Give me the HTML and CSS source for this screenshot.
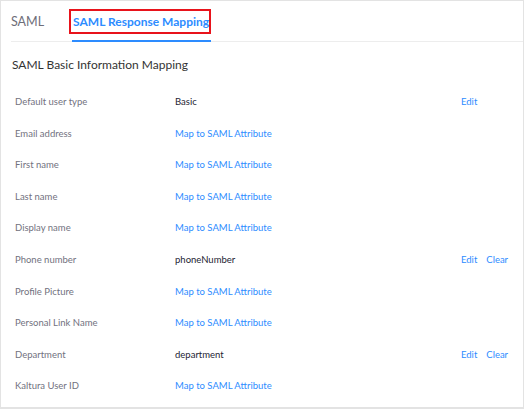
FILE: index.html
```html
<!DOCTYPE html>
<html>

<head>
  <meta charset="UTF-8">
  <meta name="viewport" content="width=device-width, initial-scale=1.0">
  <title>SAML Response Mapping</title>
  <link rel="stylesheet" href="styles.css">
</head>

<body>
  <div class="panel">
    <div class="tabs">
      <div class="tab">SAML</div>
      <div class="tab active"><span class="mark">SAML Response Mapping</span></div>
    </div>

    <h2 class="title">SAML Basic Information Mapping</h2>

    <div class="rows">
      <div class="row">
        <span class="label">Default user type</span>
        <span class="value">Basic</span>
        <span class="actions"><a>Edit</a></span>
      </div>
      <div class="row">
        <span class="label">Email address</span>
        <a class="value">Map to SAML Attribute</a>
        <span class="actions"></span>
      </div>
      <div class="row">
        <span class="label">First name</span>
        <a class="value">Map to SAML Attribute</a>
        <span class="actions"></span>
      </div>
      <div class="row">
        <span class="label">Last name</span>
        <a class="value">Map to SAML Attribute</a>
        <span class="actions"></span>
      </div>
      <div class="row">
        <span class="label">Display name</span>
        <a class="value">Map to SAML Attribute</a>
        <span class="actions"></span>
      </div>
      <div class="row">
        <span class="label">Phone number</span>
        <span class="value">phoneNumber</span>
        <span class="actions"><a>Edit</a><a>Clear</a></span>
      </div>
      <div class="row">
        <span class="label">Profile Picture</span>
        <a class="value">Map to SAML Attribute</a>
        <span class="actions"></span>
      </div>
      <div class="row">
        <span class="label">Personal Link Name</span>
        <a class="value">Map to SAML Attribute</a>
        <span class="actions"></span>
      </div>
      <div class="row">
        <span class="label">Department</span>
        <span class="value">department</span>
        <span class="actions"><a>Edit</a><a>Clear</a></span>
      </div>
      <div class="row">
        <span class="label">Kaltura User ID</span>
        <a class="value">Map to SAML Attribute</a>
        <span class="actions"></span>
      </div>
    </div>
  </div>
</body>

</html>
```

FILE: styles.css
```css
html,
body {
  margin: 0;
  background: white;
  font-family: Lato, "Open Sans", sans-serif;
}

.panel {
  width: 522px;
  height: 406px;
  border: 1px solid #e3e3e3;
  border-bottom-width: 2px;
  background: white;
  overflow: hidden;
}

.tabs {
  display: flex;
  align-items: flex-end;
  height: 40px;
  margin-left: 10px;
  border-bottom: 1px solid #ededed;
}

.tab {
  font-size: 12.5px;
  line-height: 15px;
  color: #6e6e78;
  padding-bottom: 12px;
  margin-right: 28px;
}

.tab.active {
  font-size: 12px;
  color: #2d8cff;
  font-weight: bold;
  padding: 0 0 6px 1px;
  margin: 0 0 -1px;
  border-bottom: 2px solid #2d8cff;
}

.mark {
  display: inline-block;
  padding: 3px 0 3px 2px;
  margin-left: -4px;
  border: 2px solid #e8131b;
}

.title {
  margin: 15px 0 0 11px;
  font-size: 12px;
  line-height: 15px;
  font-weight: normal;
  color: #333;
}

.rows {
  margin-top: 14px;
}

.row {
  display: flex;
  align-items: center;
  height: 31.55px;
  font-size: 9.5px;
}

.label {
  width: 160px;
  padding-left: 14px;
  color: #727280;
}

.value {
  flex: 1;
  color: #232333;
}

a,
a.value {
  color: #2d8cff;
}

.actions {
  width: 62px;
  display: flex;
  gap: 9px;
}
```
